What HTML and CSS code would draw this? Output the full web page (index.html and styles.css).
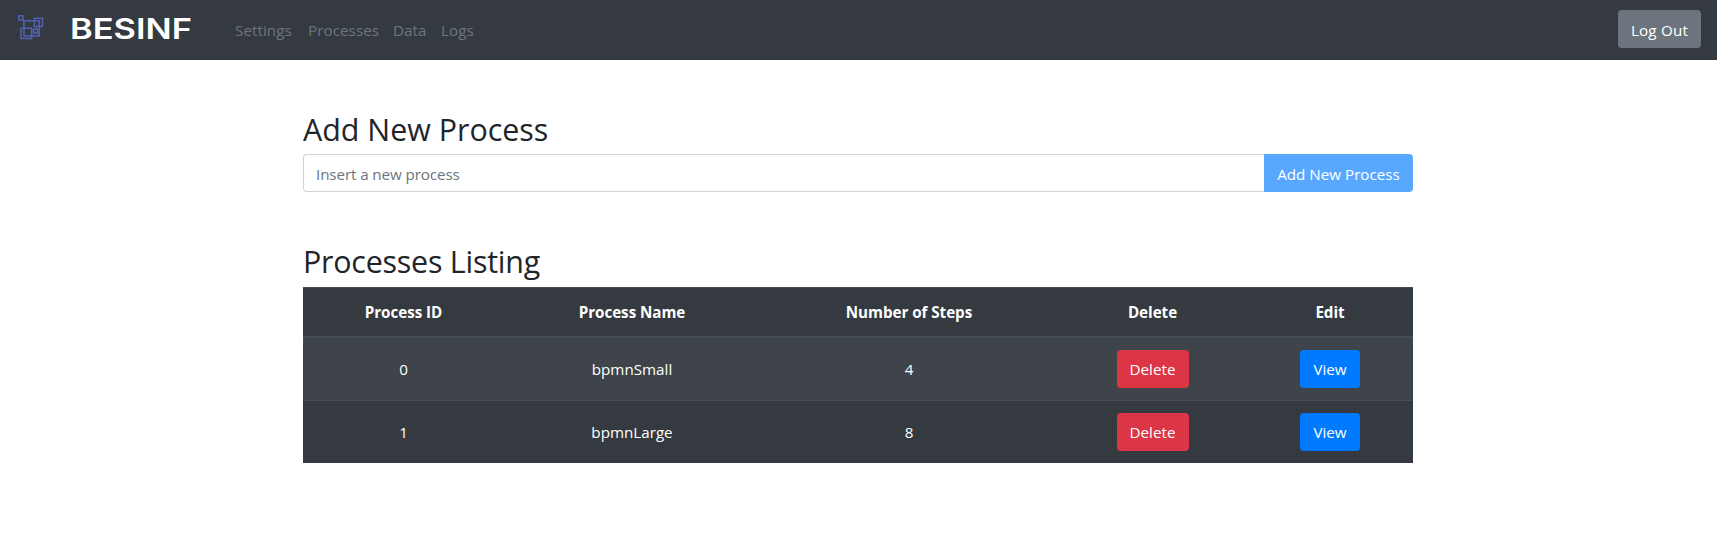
FILE: index.html
```html
<!DOCTYPE html>
<html lang="en">
<head>
<meta charset="utf-8">
<title>BESINF - Processes</title>
<link rel="stylesheet" href="styles.css">
</head>
<body>
<header class="navbar">
  <a class="brand">
    <svg class="brand-icon" width="30" height="30" viewBox="0 0 30 30" fill="none" stroke="#5261b5" stroke-width="1.5">
      <rect x="3.8" y="1.8" width="4.2" height="4.2"/>
      <rect x="9" y="6.8" width="15.2" height="15.2"/>
      <rect x="19.3" y="4.3" width="8.2" height="8.2"/>
      <rect x="6" y="14.3" width="10.6" height="10.2"/>
      <rect x="18.6" y="15" width="4" height="4"/>
    </svg>
    <svg class="brand-name" width="130" height="38" viewBox="0 0 130 38"><text x="-1" y="25" textLength="122" lengthAdjust="spacingAndGlyphs">BESINF</text></svg>
  </a>
  <nav class="links">
    <a class="settings">Settings</a><a class="processes">Processes</a><a class="data">Data</a><a class="logs">Logs</a>
  </nav>
  <button class="btn btn-secondary">Log Out</button>
</header>
<main class="container">
  <h2>Add New Process</h2>
  <div class="input-group">
    <input class="field" type="text" placeholder="Insert a new process">
    <button class="btn btn-add">Add New Process</button>
  </div>
  <h2 class="listing-title">Processes Listing</h2>
  <table class="table">
    <colgroup><col class="c-id"><col class="c-name"><col class="c-steps"><col class="c-delete"><col class="c-edit"></colgroup>
    <thead>
      <tr><th>Process ID</th><th>Process Name</th><th>Number of Steps</th><th>Delete</th><th>Edit</th></tr>
    </thead>
    <tbody>
      <tr><td>0</td><td>bpmnSmall</td><td>4</td><td><button class="btn btn-danger">Delete</button></td><td><button class="btn btn-primary">View</button></td></tr>
      <tr><td>1</td><td>bpmnLarge</td><td>8</td><td><button class="btn btn-danger">Delete</button></td><td><button class="btn btn-primary">View</button></td></tr>
    </tbody>
  </table>
</main>
</body>
</html>
```
FILE: styles.css
```css
* { box-sizing: border-box; }
body {
  margin: 0;
  background: #fff;
  color: #212529;
  font: 15.2px/24px "Open Sans", "Noto Sans", sans-serif;
}
.navbar {
  display: flex;
  align-items: center;
  height: 60px;
  padding: 0 16px 0 15px;
  background: #343a40;
}
.brand { display: flex; width: 220px; height: 32px; }
.brand-icon { margin-right: 26px; }
.brand-name { overflow: visible; fill: #fff; font: 600 28.5px Inter, sans-serif; }
.links { display: flex; flex: 1; color: #6c757d; }
.links a { white-space: nowrap; letter-spacing: 0.06px; }
.settings { width: 73px; }
.processes { width: 85px; }
.data { width: 48px; }
.btn {
  height: 38px;
  padding: 2px 0 0;
  border: 0;
  border-radius: 4px;
  color: #fff;
  font: inherit;
  white-space: nowrap;
}
.btn-secondary { width: 83px; margin-top: -2px; background: #6c757d; letter-spacing: 0.2px; }
.container { width: 1110px; margin: 0 0 0 303px; padding-top: 51px; }
h2 { margin: 0 0 5px; font-size: 30.4px; font-weight: 400; line-height: 38px; }
.input-group { display: flex; height: 38px; }
.field {
  flex: 1;
  padding: 2px 12px 0;
  border: 1px solid #ced4da;
  border-right: 0;
  border-radius: 4px 0 0 4px;
  font: inherit;
  letter-spacing: -0.1px;
}
.field::placeholder { color: #6c757d; opacity: 1; }
.btn-add { width: 149px; border-radius: 0 4px 4px 0; background: #59a8ff; }
.listing-title { margin: 51px 0 6px; letter-spacing: -0.22px; }
.table {
  width: 100%;
  border-collapse: separate;
  border-spacing: 0;
  table-layout: fixed;
  background: #343a40;
  color: #fff;
  text-align: center;
}
.c-id { width: 201px; }
.c-name { width: 256px; }
.c-steps { width: 298px; }
.c-delete { width: 189px; }
.c-edit { width: 166px; }
th, td { padding: 0; border-top: 1px solid #454d55; vertical-align: middle; }
th { height: 51px; border-bottom: 2px solid #454d55; font-weight: 700; letter-spacing: -0.04px; }
td { height: 63px; }
td .btn { display: block; margin: 0 auto; padding: 0; }
tbody tr:first-child td { height: 62px; border-top: 0; }
tbody tr:first-child { background: #3e444a; }
.btn-danger { width: 72px; background: #dc3545; }
.btn-primary { width: 60px; background: #007bff; }
```
